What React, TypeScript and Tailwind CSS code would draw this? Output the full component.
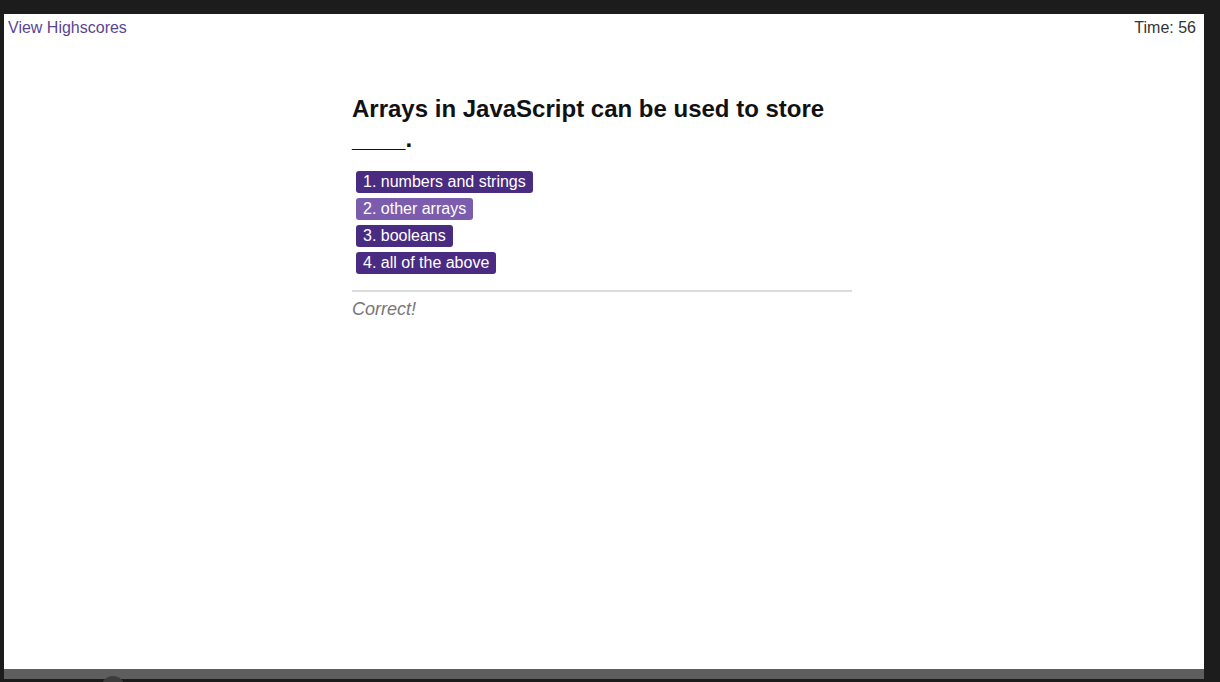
export default function App() {
  const choices = [
    { label: "1. numbers and strings", hover: false },
    { label: "2. other arrays", hover: true },
    { label: "3. booleans", hover: false },
    { label: "4. all of the above", hover: false },
  ];

  return (
    <div className="relative w-[1220px] h-[682px] overflow-hidden bg-[#1c1c1c] pl-[4px] pt-[14px] font-['Liberation_Sans',Arial,sans-serif]">
      {/* page */}
      <div className="w-[1200px] h-[655px] bg-white flex flex-col">
        <header className="flex justify-between pt-[5px] px-[4px] text-[16px] leading-[18px]">
          <a href="#" className="text-[#5b4591]">View Highscores</a>
          <span className="text-[#333] pr-[4px]">Time: 56</span>
        </header>

        <main className="ml-[348px] mt-[57px] w-[500px]">
          <h2 className="text-[24px] leading-[30px] font-bold text-[#111]">
            Arrays in JavaScript can be used to store ____.
          </h2>

          <div className="mt-[17px] ml-[4px] flex flex-col items-start gap-[5px]">
            {choices.map((c) => (
              <button
                key={c.label}
                className={
                  c.hover
                    ? "h-[22px] px-[7px] rounded-[3px] bg-[#7c5cad] text-white text-[16px] leading-[22px]"
                    : "h-[22px] px-[7px] rounded-[3px] bg-[#4a2b82] text-white text-[16px] leading-[22px]"
                }
              >
                {c.label}
              </button>
            ))}
          </div>

          <hr className="mt-[16px] border-0 border-t-2 border-[#dcdcdc]" />
          <p className="mt-[6px] text-[18px] leading-[22px] italic text-[#777]">Correct!</p>
        </main>
      </div>

      {/* player bar */}
      <div className="w-[1200px] h-[10px] bg-[#5e5e5e]" />
      <div className="absolute left-[101px] top-[676px] w-[24px] h-[24px] rounded-full bg-[#3c3c3c]" />
    </div>
  );
}
